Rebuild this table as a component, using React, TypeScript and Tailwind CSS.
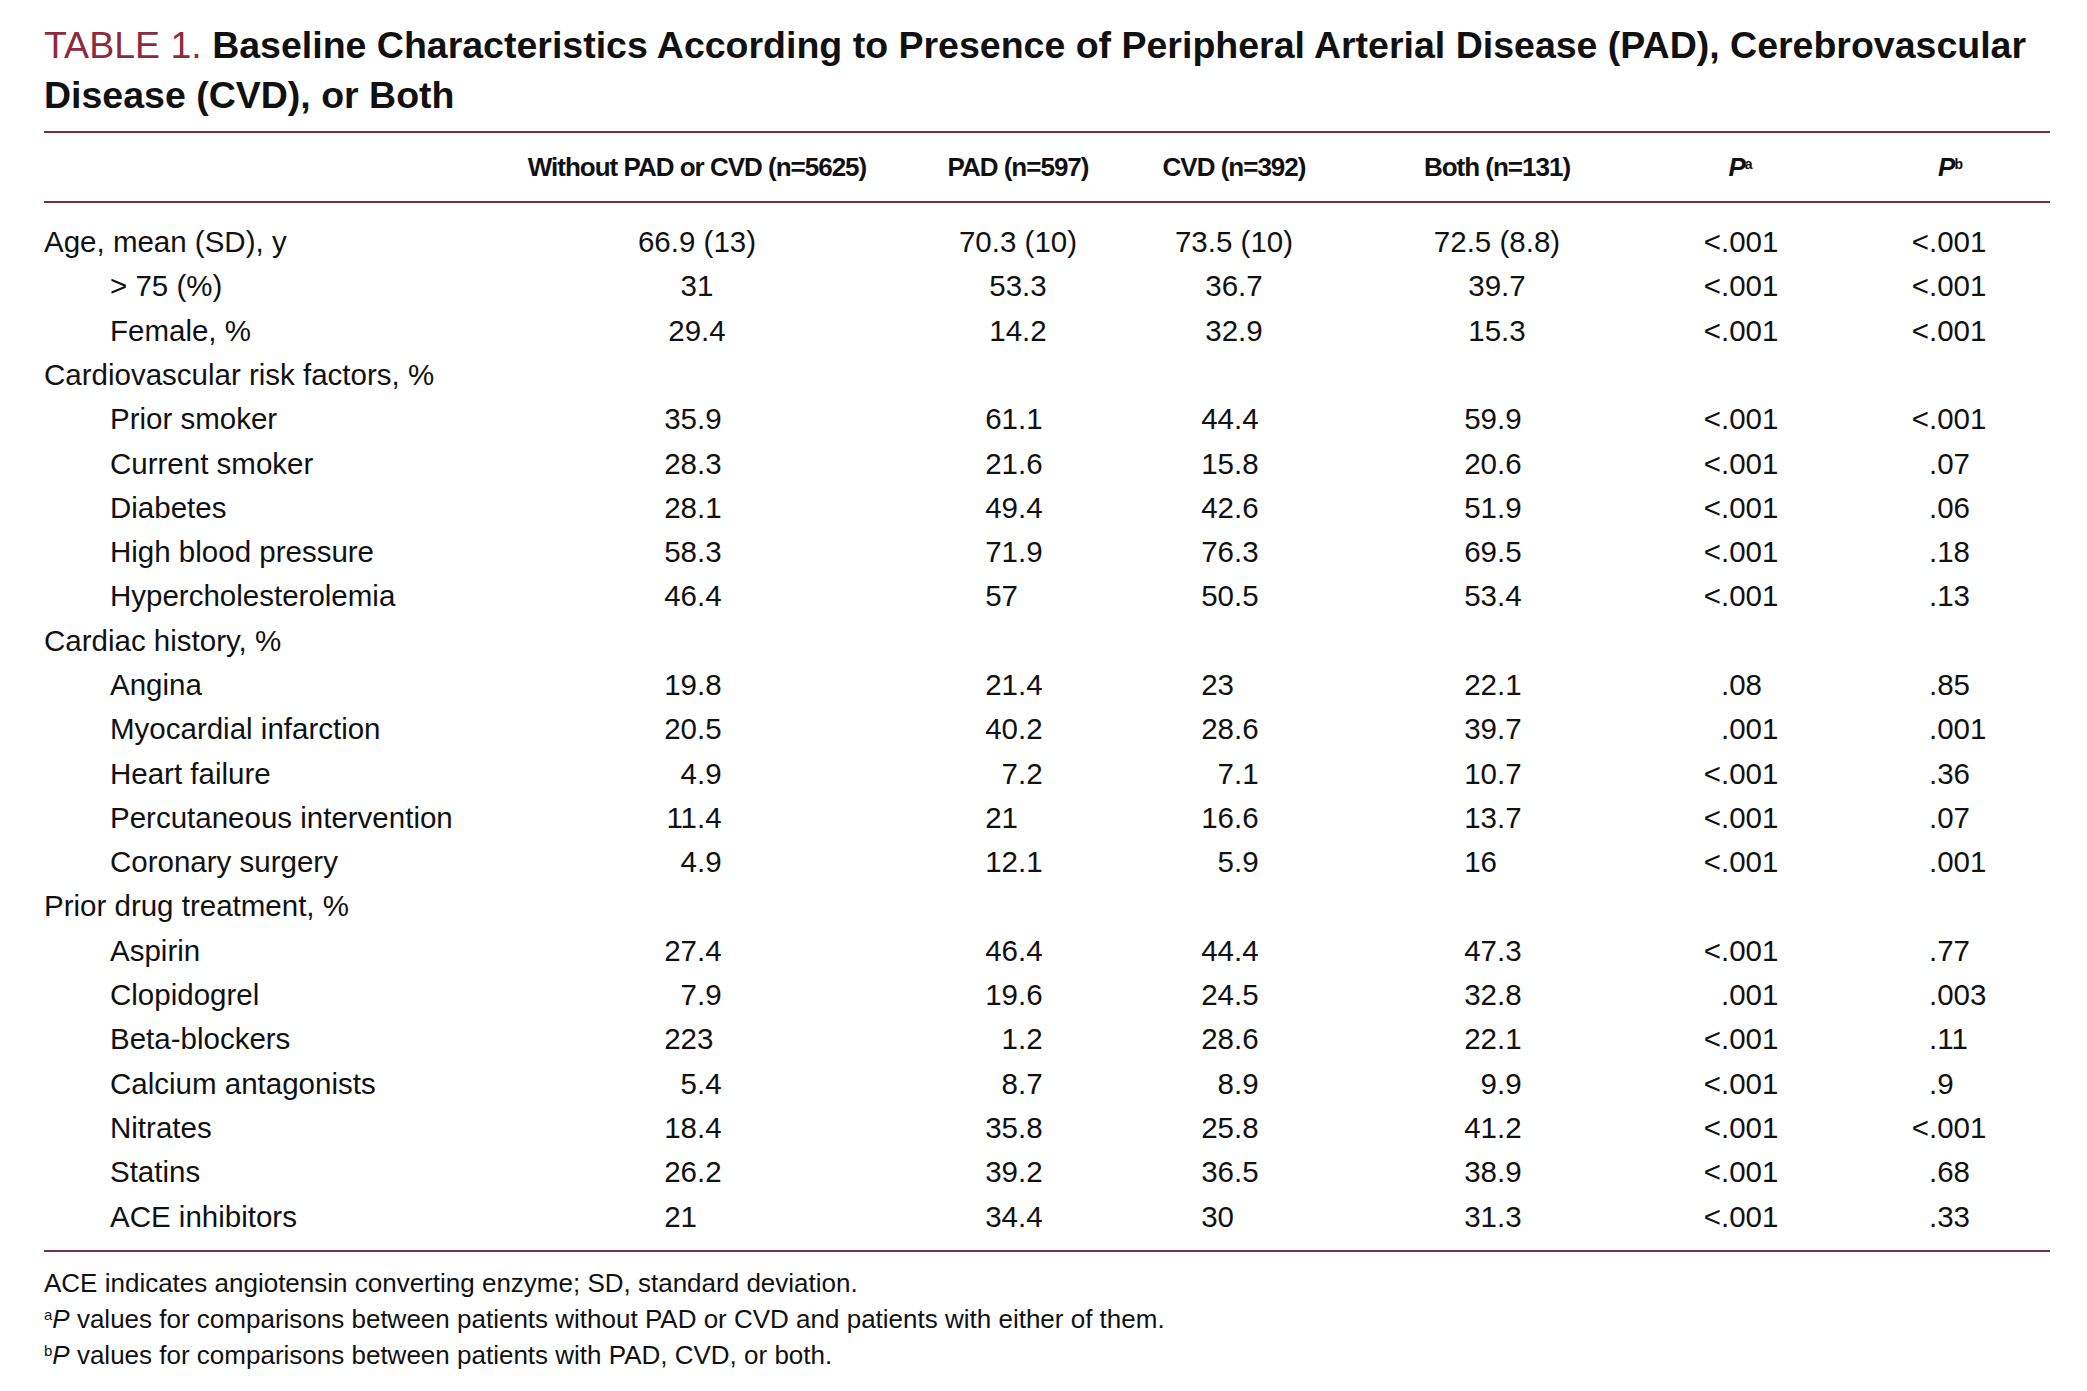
import React from "react";

// Baseline characteristics table (PAD / CVD)
// - decimal-aligned numeric cells, dot sits on the column centre
// - first three rows are centred instead

type Row = {
  label: string;
  indent?: boolean;
  center?: boolean;
  v?: string[];
};

const rows: Row[] = [
  { label: "Age, mean (SD), y", center: true, v: ["66.9 (13)", "70.3 (10)", "73.5 (10)", "72.5 (8.8)", "<.001", "<.001"] },
  { label: "> 75 (%)", indent: true, center: true, v: ["31", "53.3", "36.7", "39.7", "<.001", "<.001"] },
  { label: "Female, %", indent: true, center: true, v: ["29.4", "14.2", "32.9", "15.3", "<.001", "<.001"] },
  { label: "Cardiovascular risk factors, %" },
  { label: "Prior smoker", indent: true, v: ["35.9", "61.1", "44.4", "59.9", "<.001", "<.001"] },
  { label: "Current smoker", indent: true, v: ["28.3", "21.6", "15.8", "20.6", "<.001", ".07"] },
  { label: "Diabetes", indent: true, v: ["28.1", "49.4", "42.6", "51.9", "<.001", ".06"] },
  { label: "High blood pressure", indent: true, v: ["58.3", "71.9", "76.3", "69.5", "<.001", ".18"] },
  { label: "Hypercholesterolemia", indent: true, v: ["46.4", "57", "50.5", "53.4", "<.001", ".13"] },
  { label: "Cardiac history, %" },
  { label: "Angina", indent: true, v: ["19.8", "21.4", "23", "22.1", ".08", ".85"] },
  { label: "Myocardial infarction", indent: true, v: ["20.5", "40.2", "28.6", "39.7", ".001", ".001"] },
  { label: "Heart failure", indent: true, v: ["4.9", "7.2", "7.1", "10.7", "<.001", ".36"] },
  { label: "Percutaneous intervention", indent: true, v: ["11.4", "21", "16.6", "13.7", "<.001", ".07"] },
  { label: "Coronary surgery", indent: true, v: ["4.9", "12.1", "5.9", "16", "<.001", ".001"] },
  { label: "Prior drug treatment, %" },
  { label: "Aspirin", indent: true, v: ["27.4", "46.4", "44.4", "47.3", "<.001", ".77"] },
  { label: "Clopidogrel", indent: true, v: ["7.9", "19.6", "24.5", "32.8", ".001", ".003"] },
  { label: "Beta-blockers", indent: true, v: ["223", "1.2", "28.6", "22.1", "<.001", ".11"] },
  { label: "Calcium antagonists", indent: true, v: ["5.4", "8.7", "8.9", "9.9", "<.001", ".9"] },
  { label: "Nitrates", indent: true, v: ["18.4", "35.8", "25.8", "41.2", "<.001", "<.001"] },
  { label: "Statins", indent: true, v: ["26.2", "39.2", "36.5", "38.9", "<.001", ".68"] },
  { label: "ACE inhibitors", indent: true, v: ["21", "34.4", "30", "31.3", "<.001", ".33"] },
];

const GRID = "grid grid-cols-[443px_420px_222px_210px_316px_132px_284px]";

function Dec({ value }: { value: string }) {
  const i = value.indexOf(".");
  if (i < 0) {
    return (
      <div className="grid grid-cols-2">
        <div className="flex justify-end">
          <span className="w-[2ch] whitespace-nowrap">{value}</span>
        </div>
        <div />
      </div>
    );
  }
  return (
    <div className="grid grid-cols-2 whitespace-nowrap">
      <span className="text-right">{value.slice(0, i)}</span>
      <span>{value.slice(i)}</span>
    </div>
  );
}

function Cell({ value, center }: { value: string; center?: boolean }) {
  if (center) return <div className="text-center whitespace-nowrap">{value}</div>;
  return <Dec value={value} />;
}

function PHead({ sup, shift }: { sup: string; shift: string }) {
  return (
    <div className={`text-center ${shift}`}>
      <span className="italic">P</span>
      <sup className="text-[14px] font-bold not-italic">{sup}</sup>
    </div>
  );
}

export default function App() {
  return (
    <div className="min-h-screen bg-white text-[#111] font-['Liberation_Sans',Arial,sans-serif]">
      <div className="pl-[44px] pt-[20px]">
        {/* Title */}
        <h1 className="text-[37.5px] leading-[50px] whitespace-nowrap">
          <span className="text-[#8d2a3e]">TABLE 1. </span>
          <span className="font-bold">
            Baseline Characteristics According to Presence of Peripheral Arterial Disease (PAD), Cerebrovascular
            <br />
            Disease (CVD), or Both
          </span>
        </h1>

        <div className="mt-[11px] h-[2px] w-[2006px] bg-[#7e2d41]" />

        {/* Column headings */}
        <div className={`${GRID} h-[68px] items-center text-[26px] font-bold tracking-[-1px]`}>
          <div />
          <div className="text-center whitespace-nowrap">Without PAD or CVD (n=5625)</div>
          <div className="text-center whitespace-nowrap">PAD (n=597)</div>
          <div className="text-center whitespace-nowrap">CVD (n=392)</div>
          <div className="text-center whitespace-nowrap">Both (n=131)</div>
          <PHead sup="a" shift="pl-[38px]" />
          <PHead sup="b" shift="pl-[42px]" />
        </div>

        <div className="h-[2px] w-[2006px] bg-[#7e2d41]" />

        {/* Body */}
        <div className="pt-[17px] pb-[11px] text-[29.5px]">
          {rows.map((r) => (
            <div key={r.label} className={`${GRID} h-[44.3px] items-center`}>
              <div className={`whitespace-nowrap ${r.indent ? "pl-[66px]" : ""}`}>{r.label}</div>
              {r.v?.map((val, j) => (
                <Cell key={j} value={val} center={r.center && j < 4} />
              ))}
            </div>
          ))}
        </div>

        <div className="h-[2px] w-[2006px] bg-[#7e2d41]" />

        {/* Footnotes */}
        <div className="pt-[13px] text-[26px] leading-[36px]">
          <p>ACE indicates angiotensin converting enzyme; SD, standard deviation.</p>
          <p>
            <sup className="text-[15px]">a</sup>
            <span className="italic">P</span> values for comparisons between patients without PAD or CVD and patients with either of them.
          </p>
          <p>
            <sup className="text-[15px]">b</sup>
            <span className="italic">P</span> values for comparisons between patients with PAD, CVD, or both.
          </p>
        </div>
      </div>
    </div>
  );
}
